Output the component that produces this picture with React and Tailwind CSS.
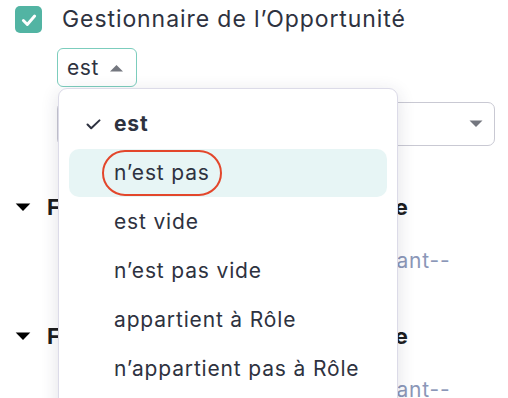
import React from "react";

const font = { fontFamily: "Inter, 'Noto Sans', sans-serif" };

const options = [
  { label: "est", selected: true },
  { label: "n’est pas", active: true },
  { label: "est vide" },
  { label: "n’est pas vide" },
  { label: "appartient à Rôle" },
  { label: "n’appartient pas à Rôle" },
];

const Caret = ({ up, className }) => (
  <svg viewBox="0 0 14 8" className={className} fill="currentColor">
    {up ? <path d="M0.5 7.5 L7 1 L13.5 7.5 Z" /> : <path d="M0.5 0.5 L7 7 L13.5 0.5 Z" />}
  </svg>
);

const Section = ({ first }) => (
  <div className={first ? "mt-[46px]" : "mt-[46px]"}>
    <div className="flex items-center h-[30px]">
      <Caret className="w-[16px] h-[9px] text-black" />
      <span className="ml-[16px] text-[22px] font-bold tracking-[0.02em] text-[#1c1c1c] whitespace-nowrap">
        Filtre du Propriétaire de la Tâche
      </span>
    </div>
    <div className="ml-[74px] mt-[25px] text-[21px] leading-[28px] tracking-[0.04em] text-[#8b97b8] whitespace-nowrap">
      --Sélectionnez un Représentant--
    </div>
  </div>
);

const App = () => {
  return (
    <div
      className="relative w-[508px] h-[398px] overflow-hidden bg-white text-[#2e3240]"
      style={font}
    >
      <div className="pl-[15px] pt-[6px]">
        <div className="flex items-center">
          <div className="w-[27px] h-[27px] rounded-[5px] bg-[#52b4a3] flex items-center justify-center">
            <svg viewBox="0 0 16 16" className="w-[18px] h-[18px]" fill="none" stroke="white" strokeWidth="2.6" strokeLinecap="round" strokeLinejoin="round">
              <path d="M3 8.5 L6.5 12 L13 4.5" />
            </svg>
          </div>
          <span className="ml-[20px] text-[23px] leading-[27px] tracking-[0.04em] whitespace-nowrap">
            Gestionnaire de l’Opportunité
          </span>
        </div>

        <div className="ml-[42px] mt-[15px] inline-flex items-center h-[39px] pl-[9px] pr-[12px] border border-[#7ccdbd] rounded-[6px] bg-white">
          <span className="text-[21px] tracking-[0.03em]">est</span>
          <Caret up className="ml-[10px] w-[15px] h-[8px] text-[#74777f]" />
        </div>

        <div className="ml-[42px] mt-[15px] w-[438px] h-[44px] border border-[#c9c9d3] rounded-[7px] flex items-center justify-end pr-[10px]">
          <Caret className="w-[16px] h-[8px] text-[#74777f]" />
        </div>

        <Section first />
        <Section />
      </div>

      <div className="absolute left-[58px] top-[88px] w-[340px] h-[330px] bg-white border border-[#dcdbe8] rounded-[9px] shadow-[0_4px_18px_rgba(40,40,80,0.14)] pt-[11px] px-[10px]">
        {options.map((o) => (
          <div
            key={o.label}
            className={`flex items-center h-[48px] mb-[1px] rounded-[10px] ${o.active ? "bg-[#e7f5f5]" : ""}`}
          >
            <div className="w-[45px] flex justify-end pr-[13px]">
              {o.selected && (
                <svg viewBox="0 0 16 12" className="w-[15px] h-[11px]" fill="none" stroke="#2e3240" strokeWidth="2.2" strokeLinecap="round" strokeLinejoin="round">
                  <path d="M1.5 6 L5.5 10 L14.5 1.5" />
                </svg>
              )}
            </div>
            {o.active ? (
              <span className="-ml-[12px] px-[10px] py-[5px] border-2 border-[#e3462b] rounded-full text-[21px] tracking-[0.04em] whitespace-nowrap">
                {o.label}
              </span>
            ) : (
              <span className={`text-[21px] tracking-[0.04em] whitespace-nowrap ${o.selected ? "font-bold" : ""}`}>
                {o.label}
              </span>
            )}
          </div>
        ))}
      </div>
    </div>
  );
};

export default App;
